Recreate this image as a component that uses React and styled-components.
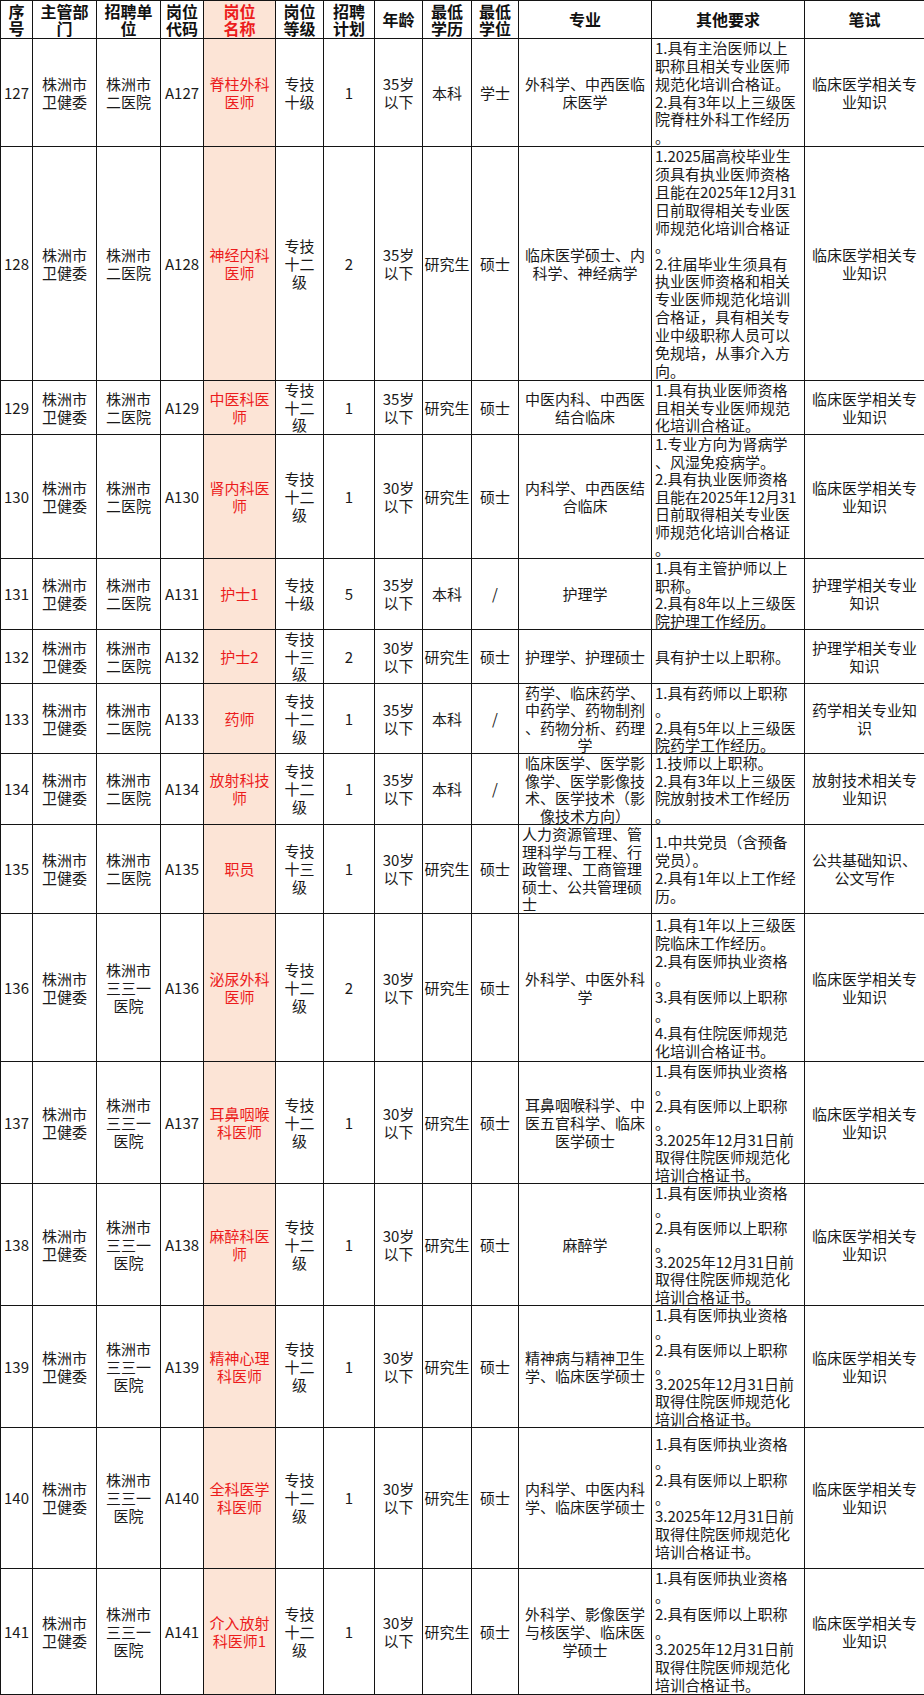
import React from "react";
import styled, { createGlobalStyle } from "styled-components";

const GlobalStyle = createGlobalStyle`
  html, body {
    margin: 0;
    padding: 0;
    background: #fff;
  }
  body {
    font-family: "Noto Sans CJK SC", "Liberation Sans", sans-serif;
    color: #111;
  }
`;

const COLS = [32, 64, 64, 43, 72, 48, 51, 48, 49, 47, 133, 153, 120];

const Table = styled.table`
  width: 924px;
  table-layout: fixed;
  border-collapse: collapse;
`;

const Th = styled.th`
  border: 1px solid #141414;
  padding: 0;
  font-weight: 700;
  color: ${(p) => (p.$accent ? "#ec1c1c" : "#111")};
  background: ${(p) => (p.$accent ? "#fce4d6" : "#fff")};
`;

const Td = styled.td`
  border: 1px solid #141414;
  padding: 0;
  vertical-align: middle;
  color: ${(p) => (p.$accent ? "#ec1c1c" : "#1a1a1a")};
  background: ${(p) => (p.$accent ? "#fce4d6" : "#fff")};
`;

const Box = styled.div`
  height: ${(p) => p.$h}px;
  display: flex;
  flex-direction: column;
  justify-content: center;
  align-items: ${(p) => (p.$left ? "flex-start" : "center")};
  padding: 0 ${(p) => (p.$left ? 3 : 0)}px;
  font-size: ${(p) => (p.$head ? 16 : 15)}px;
  line-height: ${(p) => p.$lh}px;
  white-space: nowrap;
`;

const Line = styled.span`
  display: block;
`;

const HEAD = [
  "序\n号",
  "主管部\n门",
  "招聘单\n位",
  "岗位\n代码",
  "岗位\n名称",
  "岗位\n等级",
  "招聘\n计划",
  "年龄",
  "最低\n学历",
  "最低\n学位",
  "专业",
  "其他要求",
  "笔试",
];

const CERT3 =
  "1.具有医师执业资格\n。\n2.具有医师以上职称\n。\n3.2025年12月31日前\n取得住院医师规范化\n培训合格证书。";
const CLIN = "临床医学相关专\n业知识";
const ER = "株洲市\n二医院";
const SAN = "株洲市\n三三一\n医院";
const G12 = "专技\n十二\n级";

const ROWS = [
  { h: 108, no: "127", unit: ER, name: "脊柱外科\n医师", grade: "专技\n十级", n: "1", age: "35岁\n以下", edu: "本科", deg: "学士", major: "外科学、中西医临\n床医学", other: "1.具有主治医师以上\n职称且相关专业医师\n规范化培训合格证。\n2.具有3年以上三级医\n院脊柱外科工作经历\n。", exam: CLIN },
  { h: 234, no: "128", unit: ER, name: "神经内科\n医师", grade: G12, n: "2", age: "35岁\n以下", edu: "研究生", deg: "硕士", major: "临床医学硕士、内\n科学、神经病学", other: "1.2025届高校毕业生\n须具有执业医师资格\n且能在2025年12月31\n日前取得相关专业医\n师规范化培训合格证\n。\n2.往届毕业生须具有\n执业医师资格和相关\n专业医师规范化培训\n合格证，具有相关专\n业中级职称人员可以\n免规培，从事介入方\n向。", exam: CLIN },
  { h: 54, no: "129", unit: ER, name: "中医科医\n师", grade: G12, n: "1", age: "35岁\n以下", edu: "研究生", deg: "硕士", major: "中医内科、中西医\n结合临床", other: "1.具有执业医师资格\n且相关专业医师规范\n化培训合格证。", exam: CLIN },
  { h: 124, no: "130", unit: ER, name: "肾内科医\n师", grade: G12, n: "1", age: "30岁\n以下", edu: "研究生", deg: "硕士", major: "内科学、中西医结\n合临床", other: "1.专业方向为肾病学\n、风湿免疫病学。\n2.具有执业医师资格\n且能在2025年12月31\n日前取得相关专业医\n师规范化培训合格证\n。", exam: CLIN },
  { h: 71, no: "131", unit: ER, name: "护士1", grade: "专技\n十级", n: "5", age: "35岁\n以下", edu: "本科", deg: "/", major: "护理学", other: "1.具有主管护师以上\n职称。\n2.具有8年以上三级医\n院护理工作经历。", exam: "护理学相关专业\n知识" },
  { h: 54, no: "132", unit: ER, name: "护士2", grade: "专技\n十三\n级", n: "2", age: "30岁\n以下", edu: "研究生", deg: "硕士", major: "护理学、护理硕士", other: "具有护士以上职称。", exam: "护理学相关专业\n知识" },
  { h: 70, no: "133", unit: ER, name: "药师", grade: G12, n: "1", age: "35岁\n以下", edu: "本科", deg: "/", major: "药学、临床药学、\n中药学、药物制剂\n、药物分析、药理\n学", other: "1.具有药师以上职称\n。\n2.具有5年以上三级医\n院药学工作经历。", exam: "药学相关专业知\n识" },
  { h: 71, no: "134", unit: ER, name: "放射科技\n师", grade: G12, n: "1", age: "35岁\n以下", edu: "本科", deg: "/", major: "临床医学、医学影\n像学、医学影像技\n术、医学技术（影\n像技术方向）", other: "1.技师以上职称。\n2.具有3年以上三级医\n院放射技术工作经历\n。", exam: "放射技术相关专\n业知识" },
  { h: 89, no: "135", unit: ER, name: "职员", grade: "专技\n十三\n级", n: "1", age: "30岁\n以下", edu: "研究生", deg: "硕士", major: "人力资源管理、管\n理科学与工程、行\n政管理、工商管理\n硕士、公共管理硕\n士", majorLeft: true, other: "1.中共党员（含预备\n党员）。\n2.具有1年以上工作经\n历。", exam: "公共基础知识、\n公文写作" },
  { h: 148, no: "136", unit: SAN, name: "泌尿外科\n医师", grade: G12, n: "2", age: "30岁\n以下", edu: "研究生", deg: "硕士", major: "外科学、中医外科\n学", other: "1.具有1年以上三级医\n院临床工作经历。\n2.具有医师执业资格\n。\n3.具有医师以上职称\n。\n4.具有住院医师规范\n化培训合格证书。", exam: CLIN },
  { h: 122, no: "137", unit: SAN, name: "耳鼻咽喉\n科医师", grade: G12, n: "1", age: "30岁\n以下", edu: "研究生", deg: "硕士", major: "耳鼻咽喉科学、中\n医五官科学、临床\n医学硕士", other: CERT3, exam: CLIN },
  { h: 122, no: "138", unit: SAN, name: "麻醉科医\n师", grade: G12, n: "1", age: "30岁\n以下", edu: "研究生", deg: "硕士", major: "麻醉学", other: CERT3, exam: CLIN },
  { h: 122, no: "139", unit: SAN, name: "精神心理\n科医师", grade: G12, n: "1", age: "30岁\n以下", edu: "研究生", deg: "硕士", major: "精神病与精神卫生\n学、临床医学硕士", other: CERT3, exam: CLIN },
  { h: 141, no: "140", unit: SAN, name: "全科医学\n科医师", grade: G12, n: "1", age: "30岁\n以下", edu: "研究生", deg: "硕士", major: "内科学、中医内科\n学、临床医学硕士", other: CERT3, exam: CLIN },
  { h: 126, no: "141", unit: SAN, name: "介入放射\n科医师1", grade: G12, n: "1", age: "30岁\n以下", edu: "研究生", deg: "硕士", major: "外科学、影像医学\n与核医学、临床医\n学硕士", other: CERT3, exam: CLIN },
];

const Lines = ({ lines }) => lines.map((l, i) => <Line key={i}>{l}</Line>);

// shrink line spacing only when a cell holds more lines than its row fits
const fitLh = (h, count, base) => Math.min(base, Math.floor((h / count) * 10) / 10);

const Cell = ({ h, text, accent, left }) => {
  const lines = text.split("\n");
  return (
    <Td $accent={accent}>
      <Box $h={h - 1} $lh={fitLh(h - 1, lines.length, 18)} $left={left}>
        <Lines lines={lines} />
      </Box>
    </Td>
  );
};

export default function App() {
  return (
    <>
      <GlobalStyle />
      <Table>
        <colgroup>
          {COLS.map((w, i) => (
            <col key={i} style={{ width: w }} />
          ))}
        </colgroup>
        <thead>
          <tr>
            {HEAD.map((t, i) => (
              <Th key={i} $accent={i === 4}>
                <Box $h={37} $lh={17} $head>
                  <Lines lines={t.split("\n")} />
                </Box>
              </Th>
            ))}
          </tr>
        </thead>
        <tbody>
          {ROWS.map((r) => (
            <tr key={r.no}>
              <Cell h={r.h} text={r.no} />
              <Cell h={r.h} text={"株洲市\n卫健委"} />
              <Cell h={r.h} text={r.unit} />
              <Cell h={r.h} text={"A" + r.no} />
              <Cell h={r.h} text={r.name} accent />
              <Cell h={r.h} text={r.grade} />
              <Cell h={r.h} text={r.n} />
              <Cell h={r.h} text={r.age} />
              <Cell h={r.h} text={r.edu} />
              <Cell h={r.h} text={r.deg} />
              <Cell h={r.h} text={r.major} left={r.majorLeft} />
              <Cell h={r.h} text={r.other} left />
              <Cell h={r.h} text={r.exam} />
            </tr>
          ))}
        </tbody>
      </Table>
    </>
  );
}
